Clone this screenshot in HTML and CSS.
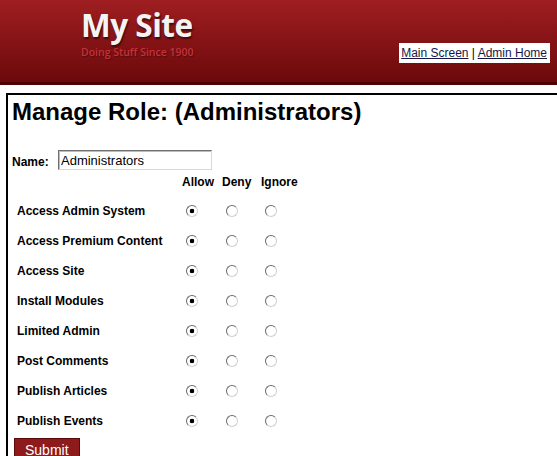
FILE: index.html
```html
<!DOCTYPE html>
<html>
<head>
<meta charset="utf-8">
<title>Manage Role</title>
<link rel="stylesheet" href="styles.css">
</head>
<body>
<header class="site-header">
  <div class="brand">
    <div class="brand-title">My Site</div>
    <div class="brand-tag">Doing Stuff Since 1900</div>
  </div>
  <nav class="top-links"><a href="#">Main Screen</a> | <a href="#">Admin Home</a></nav>
</header>
<main class="content">
  <h1 class="page-title">Manage Role: (Administrators)</h1>
  <form class="role-form">
    <div class="name-row">
      <label class="name-label" for="rolename">Name:</label>
      <input class="name-input" id="rolename" type="text" value="Administrators">
    </div>
    <div class="perm-grid">
      <div class="perm-head"></div>
      <div class="perm-head">Allow</div>
      <div class="perm-head">Deny</div>
      <div class="perm-head">Ignore</div>

      <div class="perm-label">Access Admin System</div>
      <div class="perm-cell"><input class="radio" type="radio" name="p1" checked></div>
      <div class="perm-cell"><input class="radio" type="radio" name="p1"></div>
      <div class="perm-cell"><input class="radio" type="radio" name="p1"></div>

      <div class="perm-label">Access Premium Content</div>
      <div class="perm-cell"><input class="radio" type="radio" name="p2" checked></div>
      <div class="perm-cell"><input class="radio" type="radio" name="p2"></div>
      <div class="perm-cell"><input class="radio" type="radio" name="p2"></div>

      <div class="perm-label">Access Site</div>
      <div class="perm-cell"><input class="radio" type="radio" name="p3" checked></div>
      <div class="perm-cell"><input class="radio" type="radio" name="p3"></div>
      <div class="perm-cell"><input class="radio" type="radio" name="p3"></div>

      <div class="perm-label">Install Modules</div>
      <div class="perm-cell"><input class="radio" type="radio" name="p4" checked></div>
      <div class="perm-cell"><input class="radio" type="radio" name="p4"></div>
      <div class="perm-cell"><input class="radio" type="radio" name="p4"></div>

      <div class="perm-label">Limited Admin</div>
      <div class="perm-cell"><input class="radio" type="radio" name="p5" checked></div>
      <div class="perm-cell"><input class="radio" type="radio" name="p5"></div>
      <div class="perm-cell"><input class="radio" type="radio" name="p5"></div>

      <div class="perm-label">Post Comments</div>
      <div class="perm-cell"><input class="radio" type="radio" name="p6" checked></div>
      <div class="perm-cell"><input class="radio" type="radio" name="p6"></div>
      <div class="perm-cell"><input class="radio" type="radio" name="p6"></div>

      <div class="perm-label">Publish Articles</div>
      <div class="perm-cell"><input class="radio" type="radio" name="p7" checked></div>
      <div class="perm-cell"><input class="radio" type="radio" name="p7"></div>
      <div class="perm-cell"><input class="radio" type="radio" name="p7"></div>

      <div class="perm-label">Publish Events</div>
      <div class="perm-cell"><input class="radio" type="radio" name="p8" checked></div>
      <div class="perm-cell"><input class="radio" type="radio" name="p8"></div>
      <div class="perm-cell"><input class="radio" type="radio" name="p8"></div>
    </div>
    <button class="submit-btn" type="button">Submit</button>
  </form>
</main>
</body>
</html>
```
FILE: styles.css
```css
html, body {
  margin: 0;
  padding: 0;
  background: #fff;
  overflow: hidden;
}
body {
  font-family: "Liberation Sans", Arial, sans-serif;
  color: #000;
}
.site-header {
  height: 82px;
  background: linear-gradient(#9f1e21, #6c090b);
  border-bottom: 3px solid #4e0405;
  display: flex;
  justify-content: space-between;
  align-items: flex-start;
}
.brand {
  margin-left: 81px;
  padding-top: 7px;
}
.brand-title {
  font-family: "Open Sans", sans-serif;
  font-weight: 700;
  font-size: 31.5px;
  line-height: 36px;
  color: #f4f4f4;
  letter-spacing: -0.5px;
  text-shadow: 1px 2px 2px rgba(0, 0, 0, 0.55);
}
.brand-tag {
  font-family: "Open Sans", sans-serif;
  font-weight: 600;
  font-size: 10.5px;
  line-height: 13px;
  margin-top: 3px;
  color: #c4323a;
  text-shadow: 1px 1px 1px rgba(0, 0, 0, 0.3);
}
.top-links {
  margin-top: 43px;
  margin-right: 7px;
  background: #fff;
  padding: 3px 3px 3px 2px;
  font-size: 12px;
  line-height: 14px;
  color: #000;
}
.top-links a {
  color: #161648;
  text-decoration: underline;
}
.content {
  margin: 8px 0 0 6px;
  border: 2px solid #000;
  border-right: 0;
  border-bottom: 0;
  padding: 3px 0 20px 4px;
}
.page-title {
  margin: 0;
  font-size: 24px;
  line-height: 28px;
  font-weight: 700;
}
.name-row {
  display: flex;
  align-items: center;
  margin-top: 24px;
}
.name-label {
  font-size: 12px;
  font-weight: 700;
  width: 46px;
  padding-top: 3px;
}
.name-input {
  width: 148px;
  height: 16px;
  padding: 1px 2px;
  margin: 0;
  border: 1px solid;
  border-color: #6f6f6f #d8d8d8 #d8d8d8 #6f6f6f;
  box-shadow: inset 1px 1px 0 #bdbdbd;
  font-family: "Liberation Sans", Arial, sans-serif;
  font-size: 13px;
  color: #000;
}
.perm-grid {
  display: grid;
  grid-template-columns: 170px 40px 39px 44px;
  grid-template-rows: 17px repeat(8, 30px);
  margin-top: 3px;
  align-items: center;
}
.perm-head {
  font-size: 12px;
  font-weight: 700;
}
.perm-label {
  font-size: 12px;
  font-weight: 700;
  padding-left: 5px;
  padding-top: 11px;
}
.perm-cell {
  padding-top: 11px;
  height: 14px;
  display: flex;
  align-items: center;
}
.radio {
  appearance: none;
  -webkit-appearance: none;
  width: 12px;
  height: 12px;
  margin: 0 0 0 4px;
  border-radius: 50%;
  border: 1px solid;
  border-color: #6a6a6a #d0d0d0 #d0d0d0 #6a6a6a;
  background: #fff;
}
.radio:checked {
  background: radial-gradient(circle, #000 0, #000 2px, #fff 2.6px);
}
.submit-btn {
  display: block;
  margin: 8px 0 0 2px;
  background: #8e1a1c;
  color: #fff;
  border: 1px solid #5a0a0b;
  font-family: "Liberation Sans", Arial, sans-serif;
  font-size: 14px;
  line-height: 16px;
  padding: 3px 10px 3px 10px;
}
```
